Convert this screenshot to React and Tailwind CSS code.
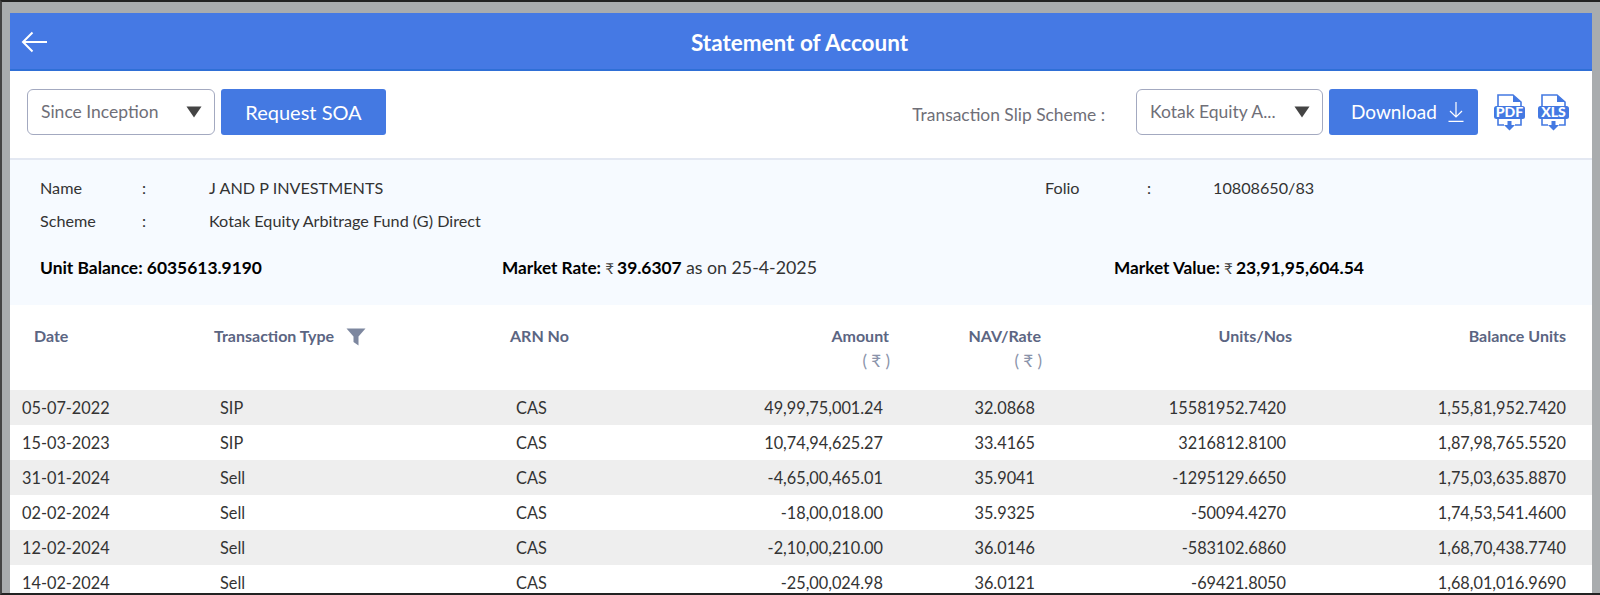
import React from 'react';

const rows = [
  ['05-07-2022', 'SIP', 'CAS', '49,99,75,001.24', '32.0868', '15581952.7420', '1,55,81,952.7420'],
  ['15-03-2023', 'SIP', 'CAS', '10,74,94,625.27', '33.4165', '3216812.8100', '1,87,98,765.5520'],
  ['31-01-2024', 'Sell', 'CAS', '-4,65,00,465.01', '35.9041', '-1295129.6650', '1,75,03,635.8870'],
  ['02-02-2024', 'Sell', 'CAS', '-18,00,018.00', '35.9325', '-50094.4270', '1,74,53,541.4600'],
  ['12-02-2024', 'Sell', 'CAS', '-2,10,00,210.00', '36.0146', '-583102.6860', '1,68,70,438.7740'],
  ['14-02-2024', 'Sell', 'CAS', '-25,00,024.98', '36.0121', '-69421.8050', '1,68,01,016.9690'],
];

const gridCols = 'grid grid-cols-[198px_296px_196px_195px_152px_251px_294px]';

const Caret = () => (
  <svg width="16" height="12" viewBox="0 0 16 12" className="shrink-0">
    <path d="M0.5 0.5H15.5L8 11.5Z" fill="#444444" />
  </svg>
);

const FileIcon = ({ label }) => (
  <svg width="31" height="38" viewBox="0 0 31 38" fill="none">
    <path d="M4 13V2H19L27 9V13" stroke="#4479e2" strokeWidth="1.6" />
    <path d="M19 2V9H27Z" fill="#4479e2" />
    <rect x="0" y="13" width="31" height="13" rx="2.5" fill="#4479e2" />
    <text x="15.5" y="24.2" textAnchor="middle" fill="#ffffff" fontSize="14" fontWeight="900" fontFamily="Lato, sans-serif">{label}</text>
    <path d="M4 26V32H10M21 32H27V26" stroke="#4479e2" strokeWidth="1.6" />
    <path d="M13.5 28H17.5V32H21L15.5 37.5L10 32H13.5Z" fill="#4479e2" />
  </svg>
);

const SelectBox = ({ text, className }) => (
  <div className={`flex h-[46px] items-center justify-between rounded-md border border-[#a3a9c0] bg-white pl-[13px] pr-3 text-[17.5px] text-[#6f6f78] ${className}`}>
    <span>{text}</span>
    <Caret />
  </div>
);

const Rupee = () => <span className="mr-[-1px] text-[15px] font-normal text-[#444444]">₹</span>;

export default function App() {
  return (
    <div className="h-[595px] overflow-hidden border-t-2 border-b-2 border-l-2 border-t-[#222] border-b-[#222] border-l-[#444] bg-[#a9acae] pt-[11px] pl-2 pr-2 font-['Lato',sans-serif]">
      <div className="h-full overflow-hidden bg-white">
        <header className="relative flex h-[58px] items-center justify-center border-b-2 border-[#2f6fd6] bg-[#4579e4] pt-[3px] pr-[3px] text-white">
          <svg width="26" height="22" viewBox="0 0 26 22" fill="none" className="absolute left-[11px] top-[18px]" stroke="#ffffff" strokeWidth="2">
            <path d="M26 11H2M11.5 1.5L2 11L11.5 20.5" />
          </svg>
          <h1 className="text-[22.5px] font-bold">Statement of Account</h1>
        </header>

        <div className="flex h-[89px] items-center border-b-2 border-[#e3e8f2] pb-[5px] pl-[17px]">
          <SelectBox text="Since Inception" className="w-[188px]" />
          <button className="ml-[6px] h-[46px] w-[165px] rounded-[3px] bg-[#4479e2] text-[20px] text-white">Request SOA</button>
          <span className="ml-auto mt-[6px] text-[17.4px] text-[#6f6f78]">Transaction Slip Scheme :</span>
          <SelectBox text="Kotak Equity A..." className="ml-[31px] w-[187px]" />
          <button className="ml-[6px] flex h-[46px] w-[149px] items-center gap-[11px] rounded-[3px] bg-[#4479e2] pl-[22px] text-[19px] text-white">
            Download
            <svg width="16" height="20" viewBox="0 0 16 20" fill="none" stroke="#ffffff" strokeWidth="1.2">
              <path d="M8 0V15M2 9L8 15L14 9M0.5 19.4H15.5" />
            </svg>
          </button>
          <div className="ml-[16px] mr-[23px] flex gap-[13px]">
            <FileIcon label="PDF" />
            <FileIcon label="XLS" />
          </div>
        </div>

        <section className="h-[145px] bg-[#f6faff] pl-[30px] pt-[16px] text-[16.2px] text-[#333333]">
          <div className="flex h-[33px]">
            <span className="w-[102px]">Name</span>
            <span className="w-[67px]">:</span>
            <span className="w-[836px]">J AND P INVESTMENTS</span>
            <span className="w-[102px]">Folio</span>
            <span className="w-[66px]">:</span>
            <span>10808650/83</span>
          </div>
          <div className="flex h-[33px]">
            <span className="w-[102px]">Scheme</span>
            <span className="w-[67px]">:</span>
            <span>Kotak Equity Arbitrage Fund (G) Direct</span>
          </div>
          <div className="mt-[12px] flex items-baseline text-[17.2px] font-bold text-black">
            <span className="w-[462px] text-[17.4px]">Unit Balance: 6035613.9190</span>
            <span className="w-[612px]">
              Market Rate: <Rupee /> <span className="text-[17.4px]">39.6307</span> <span className="text-[17.8px] font-normal text-[#333333]">as on 25-4-2025</span>
            </span>
            <span>
              Market Value: <Rupee /> <span className="text-[17.5px]">23,91,95,604.54</span>
            </span>
          </div>
        </section>

        <div className={`${gridCols} h-[85px] pt-[19px] text-[16px] font-bold text-[#5b6582]`}>
          <div className="pl-[24px]">Date</div>
          <div className="flex items-start gap-[12px] pl-[6px]">
            Transaction Type
            <svg width="20" height="18" viewBox="0 0 20 18" className="mt-[4px]">
              <path d="M0.5 0.5H19.5L12.5 8.5V17.5L7.5 14V8.5Z" fill="#7d879f" />
            </svg>
          </div>
          <div className="pl-[6px]">ARN No</div>
          <div className="pr-[6px] text-right">
            Amount
            <div className="mr-[-1px] text-[17px] font-normal text-[#8a93aa]">( ₹ )</div>
          </div>
          <div className="pr-[6px] text-right">
            NAV/Rate
            <div className="mr-[-1px] text-[17px] font-normal text-[#8a93aa]">( ₹ )</div>
          </div>
          <div className="pr-[6px] text-right">Units/Nos</div>
          <div className="pr-[26px] text-right">Balance Units</div>
        </div>

        {rows.map((row, i) => (
          <div key={row[0]} className={`${gridCols} h-[35px] items-center pt-[1px] text-[16.3px] text-[#333333] ${i % 2 === 0 ? 'bg-[#eeeeee]' : 'bg-white'}`}>
            <div className="pl-[12px]">{row[0]}</div>
            <div className="pl-[12px]">{row[1]}</div>
            <div className="pl-[12px]">{row[2]}</div>
            <div className="pr-[12px] text-right">{row[3]}</div>
            <div className="pr-[12px] text-right">{row[4]}</div>
            <div className="pr-[12px] text-right">{row[5]}</div>
            <div className="pr-[26px] text-right">{row[6]}</div>
          </div>
        ))}
      </div>
    </div>
  );
}
